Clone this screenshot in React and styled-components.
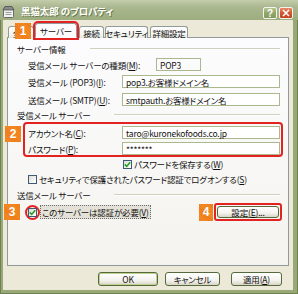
import styled, { createGlobalStyle } from "styled-components";

const GlobalStyle = createGlobalStyle`
  html, body {
    margin: 0;
    padding: 0;
    background: #ffffff;
  }

  body {
    color: #111;
    font-family: "Noto Sans CJK JP", "Noto Sans", sans-serif;
    font-feature-settings: "palt";
    font-size: 8.5px;
    letter-spacing: -0.2px;
  }

  u {
    text-decoration-thickness: 1px;
    text-underline-offset: 1px;
  }
`;

function Check({ checked }) {
  return (
    <CheckBox>
      {checked ? (
        <svg width="7" height="7" viewBox="0 0 7 7">
          <path d="M0.8 3.4 L2.7 5.4 L6.2 1.2" fill="none" stroke="#21a121" strokeWidth="1.6" />
        </svg>
      ) : null}
    </CheckBox>
  );
}

function App() {
  return (
    <>
      <GlobalStyle />
      <Window>
        <TitleBar>
          <svg width="13" height="13" viewBox="0 0 13 13">
            <rect x="1.5" y="4.5" width="10" height="8" rx="1" fill="#f2f2f2" stroke="#6b6b6b" />
            <path d="M1 5 L3 1.5 L10 1.5 L12 5 Z" fill="#8a8a8a" stroke="#4d4d4d" strokeWidth="0.8" />
            <rect x="3.5" y="7" width="6" height="1" fill="#9a9a9a" />
            <rect x="3.5" y="9" width="6" height="1" fill="#9a9a9a" />
          </svg>
          <Title>黒猫太郎 のプロパティ</Title>
          <CaptionButton $kind="help">?</CaptionButton>
          <CaptionButton $kind="close">
            <svg width="8" height="8" viewBox="0 0 8 8">
              <path d="M1 1 L7 7 M7 1 L1 7" stroke="#fff" strokeWidth="1.6" />
            </svg>
          </CaptionButton>
        </TitleBar>

        <Body>
          <TabStrip>
            <Badge style={{ left: 8, top: 0 }}>1</Badge>
            <Tab $width={26} $gap={1}>全般</Tab>
            <Tab $width={42} $gap={2} $active>サーバー</Tab>
            <Tab $width={25} $gap={1}>接続</Tab>
            <Tab $width={43} $gap={2}>セキュリティ</Tab>
            <Tab $width={38}>詳細設定</Tab>
          </TabStrip>

          <Panel>
            <Section>
              サーバー情報
              <Rule />
            </Section>
            <Field $top={2} $indent={20}>
              <Label $width={128}>
                受信メール サーバーの種類(<u>M</u>):
              </Label>
              <Input $width={45} $plain>POP3</Input>
            </Field>
            <Field $top={4} $indent={20}>
              <Label $width={94}>
                受信メール (POP3)(<u>I</u>):
              </Label>
              <Input $width={158}>pop3.お客様ドメイン名</Input>
            </Field>
            <Field $top={5} $indent={20}>
              <Label $width={94}>
                送信メール (SMTP)(<u>U</u>):
              </Label>
              <Input $width={158}>smtpauth.お客様ドメイン名</Input>
            </Field>

            <Section $top={2}>
              受信メール サーバー
              <Rule />
            </Section>
            <Marked>
              <Badge style={{ left: -20, top: 2 }}>2</Badge>
              <Field $indent={3}>
                <Label $width={94}>
                  アカウント名(<u>C</u>):
                </Label>
                <Input $width={158}>taro@kuronekofoods.co.jp</Input>
              </Field>
              <Field $top={3} $indent={3}>
                <Label $width={94}>
                  パスワード(<u>P</u>):
                </Label>
                <Input $width={158}>*******</Input>
              </Field>
            </Marked>
            <OptionRow $top={1} $indent={115}>
              <Check checked />
              <span>
                パスワードを保存する(<u>W</u>)
              </span>
            </OptionRow>
            <OptionRow $top={3} $indent={20}>
              <Check />
              <span>
                セキュリティで保護されたパスワード認証でログオンする(<u>S</u>)
              </span>
            </OptionRow>

            <Section $top={3}>
              送信メール サーバー
              <Rule />
            </Section>
            <AuthRow>
              <Badge style={{ left: -4, top: 1 }}>3</Badge>
              <Ring>
                <Check checked />
              </Ring>
              <Focused>
                このサーバーは認証が必要(<u>V</u>)
              </Focused>
              <InlineBadge>4</InlineBadge>
              <MarkBox>
                <Button $width={62} $height={12}>
                  設定(<u>E</u>)...
                </Button>
              </MarkBox>
            </AuthRow>
          </Panel>

          <ButtonRow>
            <Button $width={60} $default>
              OK
            </Button>
            <Button $width={55} $gap={7}>
              キャンセル
            </Button>
            <Button $width={51} $gap={11}>
              適用(<u>A</u>)
            </Button>
          </ButtonRow>
        </Body>
      </Window>
    </>
  );
}

const Window = styled.div`
  background: #98a977;
  box-shadow: inset 1px 0 #6f8150, inset -1px 0 #6f8150, inset 0 -1px #6f8150;
  box-sizing: border-box;
  display: flex;
  flex-direction: column;
  height: 294px;
  width: 298px;
`;

const TitleBar = styled.div`
  align-items: center;
  background: linear-gradient(#c3cdaa, #aab790 35%, #9dad7e);
  box-sizing: border-box;
  display: flex;
  flex: none;
  height: 20px;
  padding: 2px 5px 0 2px;
`;

const Title = styled.span`
  color: #ffffff;
  flex: 1;
  font-size: 9.5px;
  font-weight: bold;
  letter-spacing: -0.1px;
  margin-left: 6px;
  text-shadow: 1px 1px 0 #6a7a4a;
`;

const CaptionButton = styled.div`
  align-items: center;
  align-self: flex-end;
  background: ${(p) =>
    p.$kind === "close"
      ? "linear-gradient(#e88a6c, #d4552f 50%, #c4431f)"
      : "linear-gradient(#b6c58e, #93a76a 50%, #849a5c)"};
  border: 1px solid #f4f4ee;
  border-radius: 2px;
  box-sizing: border-box;
  color: #ffffff;
  display: flex;
  font-family: "Liberation Sans", sans-serif;
  font-size: 10px;
  font-weight: bold;
  height: 12px;
  justify-content: center;
  margin-bottom: 1px;
  margin-left: ${(p) => (p.$kind === "close" ? "2px" : "0")};
  width: 14px;
`;

const Body = styled.div`
  background: #ece9d8;
  display: flex;
  flex: 1;
  flex-direction: column;
  margin: 0 5px 4px 3px;
  padding: 3px 4px 0;
`;

const TabStrip = styled.div`
  align-items: flex-end;
  display: flex;
  height: 15px;
  margin-bottom: -1px;
  padding-left: 1px;
  position: relative;
  z-index: 1;
`;

const Tab = styled.div`
  align-items: center;
  background: ${(p) =>
    p.$active ? "#fcfcfe" : "linear-gradient(#ffffff, #f3f3ef 70%, #e8e8e0)"};
  border: 1px solid #919b9c;
  border-bottom: ${(p) => (p.$active ? "1px solid #fcfcfe" : "none")};
  border-radius: 3px 3px 0 0;
  box-sizing: border-box;
  display: flex;
  flex: none;
  height: ${(p) => (p.$active ? "15px" : "12px")};
  justify-content: center;
  margin-right: ${(p) => p.$gap || 0}px;
  outline: ${(p) => (p.$active ? "2px solid #e32222" : "none")};
  outline-offset: 0;
  white-space: nowrap;
  width: ${(p) => p.$width}px;
`;

const Badge = styled.div`
  align-items: center;
  background: repeating-linear-gradient(45deg, #f28a25 0 1px, #ee7b17 1px 2px);
  color: #ffffff;
  display: flex;
  font-family: "Liberation Sans", sans-serif;
  font-size: 12px;
  font-weight: bold;
  height: 16px;
  justify-content: center;
  letter-spacing: 0;
  position: absolute;
  width: 16px;
  z-index: 2;
`;

const InlineBadge = styled(Badge)`
  height: 17px;
  margin-left: auto;
  margin-right: 1px;
  position: static;
  width: 14px;
`;

const Panel = styled.div`
  background: linear-gradient(#fcfcfe, #f4f3ee);
  border: 1px solid #919b9c;
  box-sizing: border-box;
  display: flex;
  flex: none;
  flex-direction: column;
  height: 229px;
  padding-top: 4px;
`;

const Section = styled.div`
  align-items: center;
  display: flex;
  height: 14px;
  margin-top: ${(p) => p.$top || 0}px;
  padding: 0 8px 0 9px;
  white-space: nowrap;
`;

const Rule = styled.div`
  border-bottom: 1px solid #ffffff;
  border-top: 1px solid #d0d0bf;
  flex: 1;
  margin-left: 24px;
`;

const Field = styled.div`
  align-items: center;
  display: flex;
  height: 13px;
  margin-top: ${(p) => p.$top || 0}px;
  padding-left: ${(p) => p.$indent}px;
`;

const Label = styled.span`
  flex: none;
  white-space: nowrap;
  width: ${(p) => p.$width}px;
`;

const Input = styled.div`
  align-items: center;
  background: ${(p) => (p.$plain ? "transparent" : "#ffffff")};
  border: 1px solid #a9b98d;
  box-sizing: border-box;
  display: flex;
  flex: none;
  height: 13px;
  padding-left: 3px;
  white-space: nowrap;
  width: ${(p) => p.$width}px;
`;

const Marked = styled.div`
  border: 2px solid #e32222;
  border-radius: 4px;
  box-sizing: border-box;
  margin-left: 15px;
  padding-top: 2px;
  position: relative;
  width: 260px;
`;

const OptionRow = styled.div`
  align-items: center;
  display: flex;
  gap: 2px;
  height: 12px;
  margin-top: ${(p) => p.$top}px;
  padding-left: ${(p) => p.$indent}px;
  white-space: nowrap;
`;

const CheckBox = styled.span`
  align-items: center;
  background: linear-gradient(135deg, #dcdcd5, #ffffff);
  border: 1px solid #3e5a78;
  box-sizing: border-box;
  display: inline-flex;
  flex: none;
  height: 9px;
  justify-content: center;
  width: 9px;
`;

const AuthRow = styled.div`
  align-items: center;
  display: flex;
  height: 18px;
  margin-top: 1px;
  padding: 0 6px 0 17px;
  position: relative;
  white-space: nowrap;
`;

const Ring = styled.span`
  align-items: center;
  border: 2px solid #e32222;
  border-radius: 50%;
  box-sizing: border-box;
  display: flex;
  flex: none;
  height: 15px;
  justify-content: center;
  width: 15px;
`;

const Focused = styled.span`
  background: #e4e2d8;
  border: 1px dotted #6b6b6b;
  padding: 0 1px;
`;

const MarkBox = styled.div`
  border: 2px solid #e32222;
  border-radius: 3px;
  display: flex;
  padding: 1px;
`;

const Button = styled.div`
  align-items: center;
  background: linear-gradient(#ffffff, #f4f3ee 60%, #d9d5c8);
  border: 1px solid #55693c;
  border-radius: 3px;
  box-shadow: ${(p) => (p.$default ? "inset 0 0 0 1px #c0d08e" : "none")};
  box-sizing: border-box;
  display: flex;
  flex: none;
  height: ${(p) => p.$height || 14}px;
  justify-content: center;
  margin-left: ${(p) => p.$gap || 0}px;
  white-space: nowrap;
  width: ${(p) => p.$width}px;
`;

const ButtonRow = styled.div`
  display: flex;
  justify-content: flex-end;
  margin-top: 6px;
  padding-right: 7px;
`;

export default App;
